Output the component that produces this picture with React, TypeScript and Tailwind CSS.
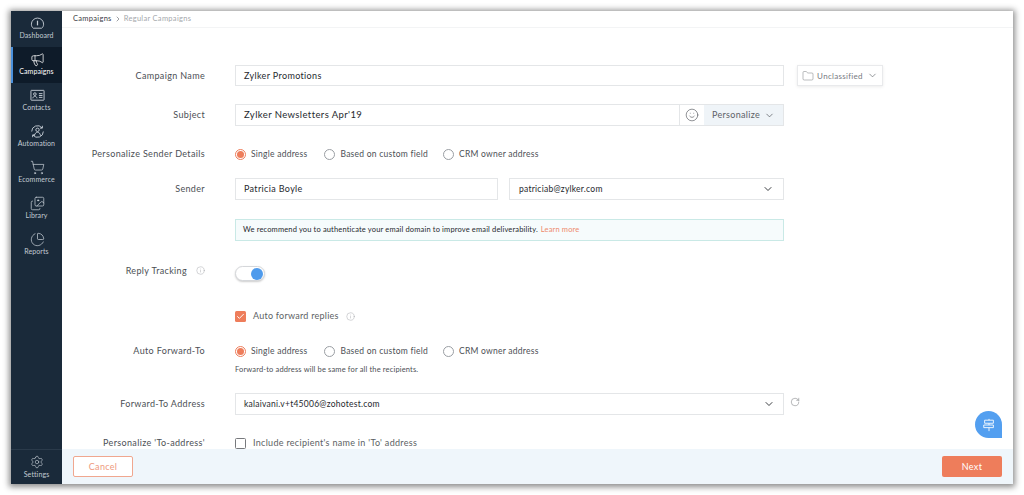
import React from 'react'
import {
  ChevronDown,
  ChevronRight,
  Check,
  Folder,
  Images,
  Info,
  Megaphone,
  PieChart,
  RotateCw,
  Settings,
  ShoppingCart,
  Smile,
} from 'lucide-react'

const DashboardIcon = () => (
  <svg width="15" height="15" viewBox="0 0 16 16" fill="none" stroke="currentColor" strokeWidth="1">
    <path d="M3.500 13h9c1.300-1 2-2.500 2-4.300a6.500 6.500 0 0 0-13 0c0 1.800.7 3.300 2 4.300z" />
    <path d="M8 5v5" strokeWidth="1.300" />
  </svg>
)

const ContactsIcon = () => (
  <svg width="15" height="15" viewBox="0 0 16 16" fill="none" stroke="currentColor" strokeWidth="1">
    <rect x="1" y="2.500" width="14" height="10.500" rx="0.5" />
    <circle cx="5.200" cy="6.500" r="1.400" />
    <path d="M3 11c.3-1.600 1.200-2.200 2.200-2.200s1.900.6 2.200 2.200" />
    <path d="M9.500 6h3.800M9.500 8h3.800M9.500 10h3.800" />
  </svg>
)

const AutomationIcon = () => (
  <svg width="15" height="15" viewBox="0 0 16 16" fill="none" stroke="currentColor" strokeWidth="1">
    <path d="M1.800 8a6.200 6.200 0 0 1 11-3.900" />
    <path d="M14.200 8a6.200 6.200 0 0 1-11 3.900" />
    <path d="M13.200 1.900v2.500h-2.500M2.800 14.100v-2.500h2.500" />
    <circle cx="8" cy="6.200" r="1.800" />
    <path d="M4.800 12.500c.2-2.200 1.600-3.700 3.200-3.700s3 1.500 3.200 3.700" />
  </svg>
)

const SignIcon = () => (
  <svg width="14" height="14" viewBox="0 0 16 16" fill="none" stroke="currentColor" strokeWidth="1">
    <path d="M3 2.500h10v3.500H3zM2 8h11v3H2zM8 1v1.500M8 6v2M8 11v4" />
  </svg>
)

const navItems = [
  { label: 'Dashboard', icon: <DashboardIcon /> },
  { label: 'Campaigns', icon: <Megaphone size={15} strokeWidth={1.2} />, active: true },
  { label: 'Contacts', icon: <ContactsIcon /> },
  { label: 'Automation', icon: <AutomationIcon /> },
  { label: 'Ecommerce', icon: <ShoppingCart size={15} strokeWidth={1.2} /> },
  { label: 'Library', icon: <Images size={15} strokeWidth={1.2} /> },
  { label: 'Reports', icon: <PieChart size={15} strokeWidth={1.2} /> },
]

function Row({
  label,
  info,
  labelClass = '',
  className,
  children,
}: {
  label?: string
  info?: boolean
  labelClass?: string
  className: string
  children: React.ReactNode
}) {
  return (
    <div className={`flex items-center ${className}`}>
      <div className={`flex w-[143px] shrink-0 items-center justify-end text-[9px] tracking-[0.35px] text-[#4c4f55] ${labelClass}`}>
        {label}
        {info && <Info size={9} strokeWidth={1} className="ml-[9px] text-[#8d9095]" />}
      </div>
      <div className="ml-[30px] flex h-full min-w-0 flex-1 items-center">{children}</div>
    </div>
  )
}

function Radio({ label, on }: { label: string; on?: boolean }) {
  return (
    <div className={`flex items-center ${on ? 'mr-[2px]' : ''}`}>
      <span className={`flex h-[11px] w-[11px] items-center justify-center rounded-full border ${on ? 'border-[#ee7d5b]' : 'border-[#9a9ea3]'}`}>
        {on && <span className="h-[7px] w-[7px] rounded-full bg-[#ee7d5b]" />}
      </span>
      <span className="ml-[5px] text-[8.5px] tracking-[0.25px] text-[#4c4f55]">{label}</span>
    </div>
  )
}

function RadioGroup() {
  return (
    <div className="flex gap-[15px]">
      <Radio label="Single address" on />
      <Radio label="Based on custom field" />
      <Radio label="CRM owner address" />
    </div>
  )
}

function TextField({ value, className }: { value: string; className: string }) {
  return (
    <div className={`flex items-center border border-[#e4e6e8] bg-white px-[8px] text-[9px] tracking-[0.35px] text-[#26292e] ${className}`}>
      {value}
    </div>
  )
}

export default function App() {
  return (
    <div className="h-[495px] w-[1024px] overflow-hidden bg-white pl-[11px] pt-[11px] [font-family:Lato,sans-serif]">
      <div className="relative flex h-[473px] w-[1002px] overflow-hidden bg-white shadow-[0_1px_6px_2px_rgba(0,0,0,0.45)]">
        {/* Sidebar */}
        <div className="flex w-[51px] shrink-0 flex-col bg-[#1a2a3a] text-[#c3cbd3]">
          {navItems.map((item) => (
            <div
              key={item.label}
              className={`flex h-[36px] flex-col items-center justify-center border-l-2 pb-[2px] ${item.active ? 'border-[#4a90dc] bg-[#0e1b29] text-white' : 'border-transparent'}`}
            >
              {item.icon}
              <span className="-ml-[2px] text-[7px] leading-[9px] tracking-[0.1px]">{item.label}</span>
            </div>
          ))}
          <div className="mt-auto flex h-[35px] flex-col items-center justify-center border-t border-[#2a3a4a]">
            <Settings size={14} strokeWidth={1.1} />
            <span className="mt-[1px] text-[7px] leading-[9px] tracking-[0.1px]">Settings</span>
          </div>
        </div>

        {/* Main */}
        <div className="flex min-w-0 flex-1 flex-col">
          <div className="flex h-[17px] shrink-0 items-center border-b border-[#f3f4f5] pl-[11px] text-[7.5px] tracking-[0.3px]">
            <span className="text-[#3d4046]">Campaigns</span>
            <ChevronRight size={8} className="mx-[2px] text-[#6d7075]" />
            <span className="text-[#a5a8ac]">Regular Campaigns</span>
          </div>

          <div className="min-h-0 flex-1 overflow-hidden">
            <Row label="Campaign Name" className="mt-[37px] h-[21px]">
              <TextField value="Zylker Promotions" className="h-full w-[549px]" />
              <div className="ml-[13px] flex h-full w-[86px] items-center justify-center gap-[3px] border border-[#e9eaec] text-[8px] tracking-[0.3px] text-[#777a7f] shadow-[0_1px_3px_rgba(0,0,0,0.08)]">
                <Folder size={12} strokeWidth={1} />
                Unclassified
                <ChevronDown size={11} strokeWidth={1.4} className="ml-[1px] text-[#5d6167]" />
              </div>
            </Row>

            <Row label="Subject" className="mt-[18px] h-[22px]">
              <div className="flex h-full w-[549px] border border-[#e4e6e8]">
                <div className="flex flex-1 items-center px-[8px] text-[9.5px] tracking-[0.4px] text-[#26292e]">Zylker Newsletters Apr'19</div>
                <div className="flex w-[25px] items-center justify-center border-l border-[#e4e6e8] text-[#44474d]">
                  <Smile size={14} strokeWidth={1} />
                </div>
                <div className="flex w-[79px] items-center justify-center gap-[4px] bg-[#eff4f8] text-[9px] tracking-[0.3px] text-[#5d6167]">
                  Personalize
                  <ChevronDown size={11} strokeWidth={1.4} className="text-[#44474d]" />
                </div>
              </div>
            </Row>

            <Row label="Personalize Sender Details" className="mt-[19px] h-[18px]">
              <RadioGroup />
            </Row>

            <Row label="Sender" className="mt-[15px] h-[22px]">
              <TextField value="Patricia Boyle" className="h-full w-[263px]" />
              <div className="ml-[11px] flex h-full w-[275px] items-center justify-between border border-[#e4e6e8] px-[9px] text-[8.5px] tracking-[0.25px] text-[#26292e]">
                patriciab@zylker.com
                <ChevronDown size={12} strokeWidth={1.8} />
              </div>
            </Row>

            <Row className="mt-[19px] h-[22px]">
              <div className="flex h-full w-[549px] items-center border border-[#c9e9e6] bg-[#f6fbfc] px-[7px] text-[7.5px] tracking-[0.15px] text-[#26292e]">
                We recommend you to authenticate your email domain to improve email deliverability.
                <span className="ml-[3px] text-[#ee8a6c]">Learn more</span>
              </div>
            </Row>

            <Row label="Reply Tracking" info labelClass="-mt-[6px]" className="mt-[25px] h-[15px]">
              <div className="flex h-[15px] w-[30px] items-center justify-end rounded-full border border-[#d5d7da] bg-white pr-[1px] shadow-[0_1px_2px_rgba(0,0,0,0.2)]">
                <span className="h-[12px] w-[12px] rounded-full bg-[#4f9bec]" />
              </div>
            </Row>

            <Row className="mt-[27px] h-[16px]">
              <span className="flex h-[11px] w-[11px] items-center justify-center rounded-[1.5px] bg-[#ee7d5b] text-white">
                <Check size={9} strokeWidth={2.5} />
              </span>
              <span className="ml-[7px] text-[9px] tracking-[0.25px] text-[#5c5f64]">Auto forward replies</span>
              <Info size={9} strokeWidth={1} className="ml-[7px] text-[#8d9095]" />
            </Row>

            <Row label="Auto Forward-To" className="mt-[18px] h-[18px]">
              <RadioGroup />
            </Row>

            <Row className="mt-[5px] h-[9px]">
              <span className="text-[7.5px] tracking-[0.15px] text-[#4c4f55]">Forward-to address will be same for all the recipients.</span>
            </Row>

            <Row label="Forward-To Address" className="mt-[19px] h-[22px]">
              <div className="flex h-full w-[549px] items-center justify-between border border-[#e4e6e8] px-[8px] text-[8.5px] tracking-[0.25px] text-[#26292e]">
                kalaivani.v+t45006@zohotest.com
                <ChevronDown size={12} strokeWidth={1.8} />
              </div>
              <RotateCw size={10} strokeWidth={1} className="ml-[6px] -mt-[4px] text-[#55585d]" />
            </Row>

            <Row label="Personalize 'To-address'" className="mt-[20px] h-[16px]">
              <span className="h-[11px] w-[11px] rounded-[1.5px] border border-[#77797d]" />
              <span className="ml-[7px] text-[9px] tracking-[0.3px] text-[#5c5f64]">Include recipient's name in 'To' address</span>
            </Row>
          </div>

          <div className="flex h-[35px] shrink-0 items-center justify-between bg-[#eff6fb] px-[11px]">
            <div className="flex h-[21px] w-[60px] items-center justify-center rounded-[2px] border border-[#f0a78f] bg-white text-[9px] tracking-[0.3px] text-[#ee9a80]">Cancel</div>
            <div className="flex h-[21px] w-[60px] items-center justify-center rounded-[2px] bg-[#ee7d5b] text-[9px] tracking-[0.3px] text-white">Next</div>
          </div>
        </div>

        {/* Floating help button */}
        <div className="absolute left-[964px] top-[400px] flex h-[27px] w-[27px] items-center justify-center rounded-full rounded-br-[2px] bg-[#539ff0] text-white">
          <SignIcon />
        </div>
      </div>
    </div>
  )
}
